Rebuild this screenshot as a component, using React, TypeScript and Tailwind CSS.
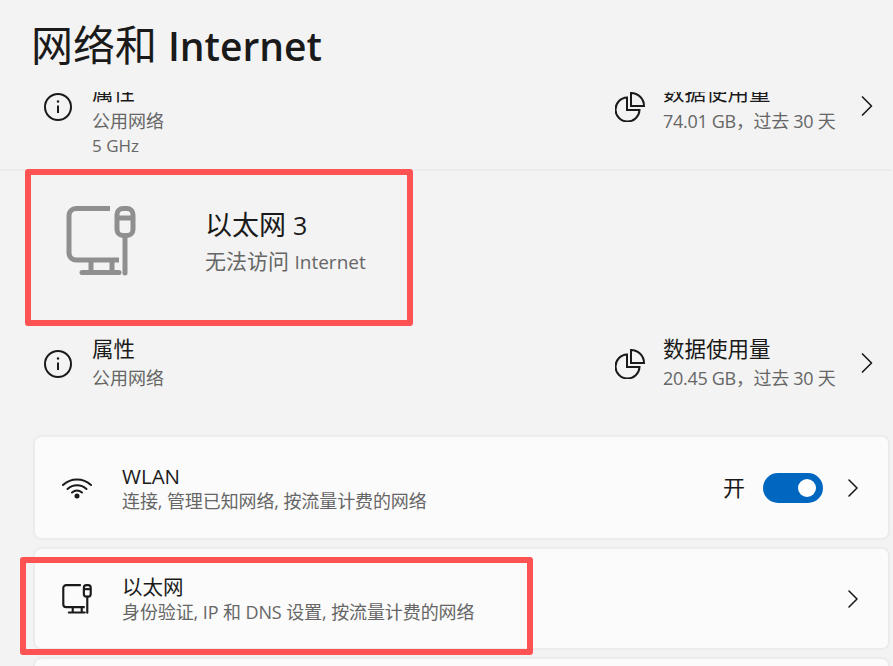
import { ChevronRight } from "lucide-react";

const font = "font-['Open_Sans','Noto_Sans_CJK_SC',sans-serif]";

function InfoIcon() {
  return (
    <svg width="30" height="30" viewBox="0 0 30 30" fill="none" stroke="#1a1a1a" strokeWidth="2">
      <circle cx="15" cy="15" r="13" />
      <path d="M15 13.5V21" />
      <circle cx="15" cy="9.5" r="1.2" fill="#1a1a1a" stroke="none" />
    </svg>
  );
}

function PieIcon() {
  return (
    <svg width="30" height="30" viewBox="0 0 30 30" fill="none" stroke="#1a1a1a" strokeWidth="2">
      <path d="M12 5.5A12 12 0 1 0 24.5 18H12Z" />
      <path d="M16 1A13 13 0 0 1 29 14H16Z" />
    </svg>
  );
}

function EthernetIcon({ className, color }: { className: string; color: string }) {
  return (
    <svg className={className} viewBox="0 0 70 70" fill="none" stroke={color} strokeWidth="5" strokeLinecap="round">
      <path d="M44 2.5H10a7 7 0 0 0-7 7V47a7 7 0 0 0 7 7h43" strokeLinecap="butt" />
      <path d="M25 54v12M46 54v12" strokeLinecap="butt" />
      <path d="M16 66.5h37" />
      <rect x="51" y="2.5" width="16" height="27" rx="6" />
      <path d="M51 12h16" strokeLinecap="butt" />
      <path d="M59 30v37" />
    </svg>
  );
}

function WifiIcon() {
  return (
    <svg width="30" height="22" viewBox="0 0 30 22" fill="none" stroke="#1a1a1a" strokeWidth="2" strokeLinecap="round">
      <path d="M1 8C9 0.5 21 0.5 29 8" />
      <path d="M5.5 12C11 7 19 7 24.5 12" />
      <path d="M10 15.5C13 13 17 13 20 15.5" />
      <circle cx="15" cy="19" r="2.5" fill="#1a1a1a" stroke="none" />
    </svg>
  );
}

function PropertyRow({ usage, extra, pad }: { usage: string; extra?: string; pad: string }) {
  return (
    <div className={`flex items-start pl-[43px] pr-[8px] ${pad}`}>
      <div className="flex flex-1 gap-[19px]">
        <div className="pt-[13px]"><InfoIcon /></div>
        <div>
          <div className="text-[21.5px] leading-[26px] text-[#1a1a1a]">属性</div>
          <div className="mt-[4px] text-[18px] leading-[25px] text-[#666666]">公用网络</div>
          {extra && <div className="text-[17px] leading-[24px] text-[#666666]">{extra}</div>}
        </div>
      </div>
      <div className="flex items-start">
        <div className="mr-[18px] pt-[13px]"><PieIcon /></div>
        <div className="w-[184px]">
          <div className="text-[21.5px] leading-[26px] text-[#1a1a1a]">数据使用量</div>
          <div className="mt-[4px] whitespace-nowrap text-[18px] leading-[25px] tracking-[-0.3px] text-[#666666]">{usage}</div>
        </div>
        <ChevronRight className="ml-[2px] mt-[9px]" size={36} strokeWidth={1.1} color="#1a1a1a" />
      </div>
    </div>
  );
}

function Card({ icon, title, sub, right, h }: { icon: React.ReactNode; title: string; sub: string; right?: React.ReactNode; h: string }) {
  return (
    <div className={`flex items-center ${h} rounded-[8px] border-2 border-[#ececec] bg-[#fbfbfb] pl-[27px] pr-[19px]`}>
      <div className="flex w-[60px] items-center">{icon}</div>
      <div className="flex-1">
        <div className="text-[20.5px] leading-[26px] text-[#1a1a1a]">{title}</div>
        <div className="text-[18px] leading-[24px] tracking-[-0.1px] text-[#666666]">{sub}</div>
      </div>
      {right}
      <ChevronRight size={32} strokeWidth={1.2} color="#1a1a1a" />
    </div>
  );
}

export default function App() {
  return (
    <div className={`relative flex h-[666px] w-[893px] flex-col overflow-hidden bg-[#f3f3f3] ${font}`}>
      <h1 className="h-[92px] shrink-0 pl-[31px] pt-[15px] text-[42px] leading-[60px] font-normal text-[#1a1a1a]">
        网络和 <span className="text-[39px] font-semibold">Internet</span>
      </h1>

      <div className="min-h-0 flex-1 overflow-hidden">
        <div className="-mt-[13px]">
          <PropertyRow usage="74.01 GB，过去 30 天" extra="5 GHz" pad="h-[90px]" />
          <div className="mr-[2px] h-[2px] bg-[#ececec]" />

          <div className="flex h-[151px] items-start pl-[66px]">
            <EthernetIcon className="mt-[35px] h-[70px] w-[70px]" color="#8f8f8f" />
            <div className="ml-[69px] pt-[37px]">
              <div className="text-[27px] leading-[34px] text-[#1a1a1a]">
                以太网 <span className="text-[25px] font-medium">3</span>
              </div>
              <div className="mt-[6px] text-[21px] leading-[26px] text-[#666666]">
                无法访问 <span className="text-[19px]">Internet</span>
              </div>
            </div>
          </div>

          <PropertyRow usage="20.45 GB，过去 30 天" pad="h-[113px] pt-[14px]" />

          <div className="flex flex-col gap-[7px] pl-[33px] pr-[3px]">
            <Card
              icon={<WifiIcon />}
              title="WLAN"
              sub="连接, 管理已知网络, 按流量计费的网络"
              h="h-[105px]"
              right={
                <div className="mr-[14px] flex items-center gap-[18px]">
                  <span className="text-[22px] text-[#1a1a1a]">开</span>
                  <div className="flex h-[30px] w-[60px] items-center justify-end rounded-full bg-[#0067c0] pr-[7px]">
                    <div className="h-[18px] w-[18px] rounded-full bg-white" />
                  </div>
                </div>
              }
            />
            <Card
              icon={<EthernetIcon className="h-[30px] w-[30px]" color="#1a1a1a" />}
              title="以太网"
              sub="身份验证, IP 和 DNS 设置, 按流量计费的网络"
              h="h-[103px]"
            />
            <div className="h-[60px] rounded-[8px] border-2 border-[#ececec] bg-[#fbfbfb]" />
          </div>
        </div>
      </div>

      {/* red annotation frames */}
      <div className="absolute left-[25px] top-[169px] h-[157px] w-[388px] rounded-[3px] border-[6px] border-[#ff5252]" />
      <div className="absolute left-[20px] top-[557px] h-[98px] w-[513px] rounded-[3px] border-[6px] border-[#ff5252]" />
    </div>
  );
}
